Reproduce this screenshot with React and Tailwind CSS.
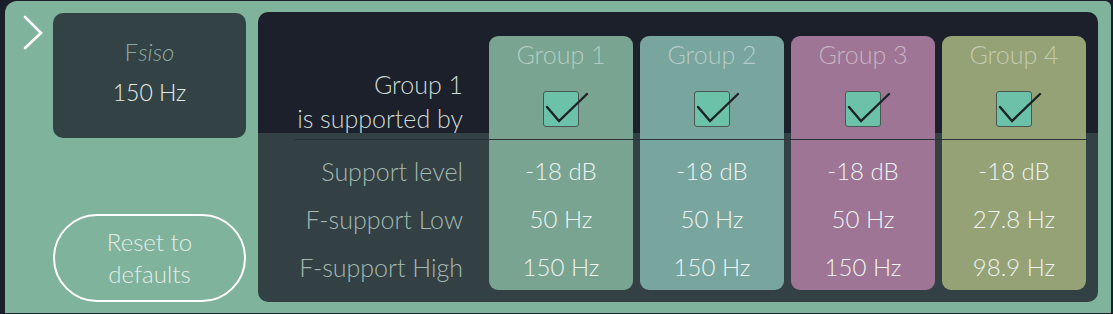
// App.jsx
const FONT = { fontFamily: 'Lato, "Noto Sans", sans-serif' };

const groups = [
  { name: "Group 1", bg: "bg-[#79a491]", level: "-18 dB", low: "50 Hz", high: "150 Hz" },
  { name: "Group 2", bg: "bg-[#79a59f]", level: "-18 dB", low: "50 Hz", high: "150 Hz" },
  { name: "Group 3", bg: "bg-[#9e7595]", level: "-18 dB", low: "50 Hz", high: "150 Hz" },
  { name: "Group 4", bg: "bg-[#95a275]", level: "-18 dB", low: "27.8 Hz", high: "98.9 Hz" },
];

const CheckBox = () => (
  <div className="relative w-[36px] h-[36px]">
    <div className="absolute inset-0 rounded-[3px] bg-[#6cc2a8] border-[1.5px] border-[#4b5654]" />
    <svg
      className="absolute left-0 top-0 overflow-visible"
      width="36"
      height="36"
      viewBox="0 0 36 36"
    >
      <polyline
        points="4,16 16,30 44,3"
        fill="none"
        stroke="#1d2326"
        strokeWidth="2.4"
        strokeLinecap="round"
        strokeLinejoin="miter"
      />
    </svg>
  </div>
);

const GroupColumn = ({ g }) => (
  <div className={`w-[144px] h-[254px] rounded-[9px] ${g.bg} flex flex-col items-center`}>
    <div className="h-[36px] leading-[36px] text-[25px] font-light text-white/45">{g.name}</div>
    <div className="mt-[19px]">
      <CheckBox />
    </div>
    <div className="mt-[20px] w-full text-center text-[24px] font-light text-[#eef4f1]">
      <div className="h-[48px] leading-[48px]">{g.level}</div>
      <div className="h-[48px] leading-[48px]">{g.low}</div>
      <div className="h-[47px] leading-[48px]">{g.high}</div>
    </div>
  </div>
);

export default function App() {
  return (
    <div className="w-[1113px] h-[314px] bg-[#1b1f29] overflow-hidden" style={FONT}>
      <div className="ml-[5px] mt-[1px] w-[1106px] h-[312px] bg-[#80b39b] rounded-tl-[12px] rounded-tr-[6px] flex pt-[11px] pb-[11px] pr-[13px]">
        {/* chevron */}
        <div className="w-[48px] shrink-0">
          <svg width="48" height="50" viewBox="0 0 48 50" className="-mt-[11px]">
            <polyline
              points="20,16 36,32 20,47"
              fill="none"
              stroke="#ffffff"
              strokeWidth="2.6"
              strokeLinecap="round"
            />
          </svg>
        </div>

        {/* left controls */}
        <div className="w-[193px] shrink-0 flex flex-col justify-between">
          <div className="mt-[1px] h-[125px] rounded-[10px] bg-[#334345] flex flex-col items-center pt-[20px]">
            <div className="text-[24px] font-light text-[#8fa7a1] leading-[38px]">
              F<span className="italic">siso</span>
            </div>
            <div className="text-[23px] font-light text-[#e3ebe8] leading-[34px] mt-[4px]">150 Hz</div>
          </div>
          <button className="h-[88px] rounded-full border-2 border-white text-[24px] font-light leading-[32px] text-[#e4ece9]">
            Reset to
            <br />
            defaults
          </button>
        </div>

        {/* group panel */}
        <div className="relative ml-[12px] flex-1 rounded-[10px] bg-[linear-gradient(to_bottom,#1c202b_121px,#334044_121px)] flex pt-[24px] pb-[12px] pr-[12px] gap-[7px]">
          <div className="w-[224px] shrink-0 pr-[19px] text-right text-[25px] font-light">
            <div className="mt-[31px] text-[#cddbd6]">
              <div className="h-[34px] leading-[34px]">Group 1</div>
              <div className="h-[34px] leading-[34px]">is supported by</div>
            </div>
            <div className="mt-[12px] text-[#a3b8b2]">
              <div className="h-[48px] leading-[48px]">Support level</div>
              <div className="h-[48px] leading-[48px]">F-support Low</div>
              <div className="h-[48px] leading-[48px]">F-support High</div>
            </div>
          </div>
          {groups.map((g) => (
            <GroupColumn key={g.name} g={g} />
          ))}
          <div className="absolute left-[36px] right-[11px] top-[127px] h-px bg-[#2b3438]" />
        </div>
      </div>
    </div>
  );
}
